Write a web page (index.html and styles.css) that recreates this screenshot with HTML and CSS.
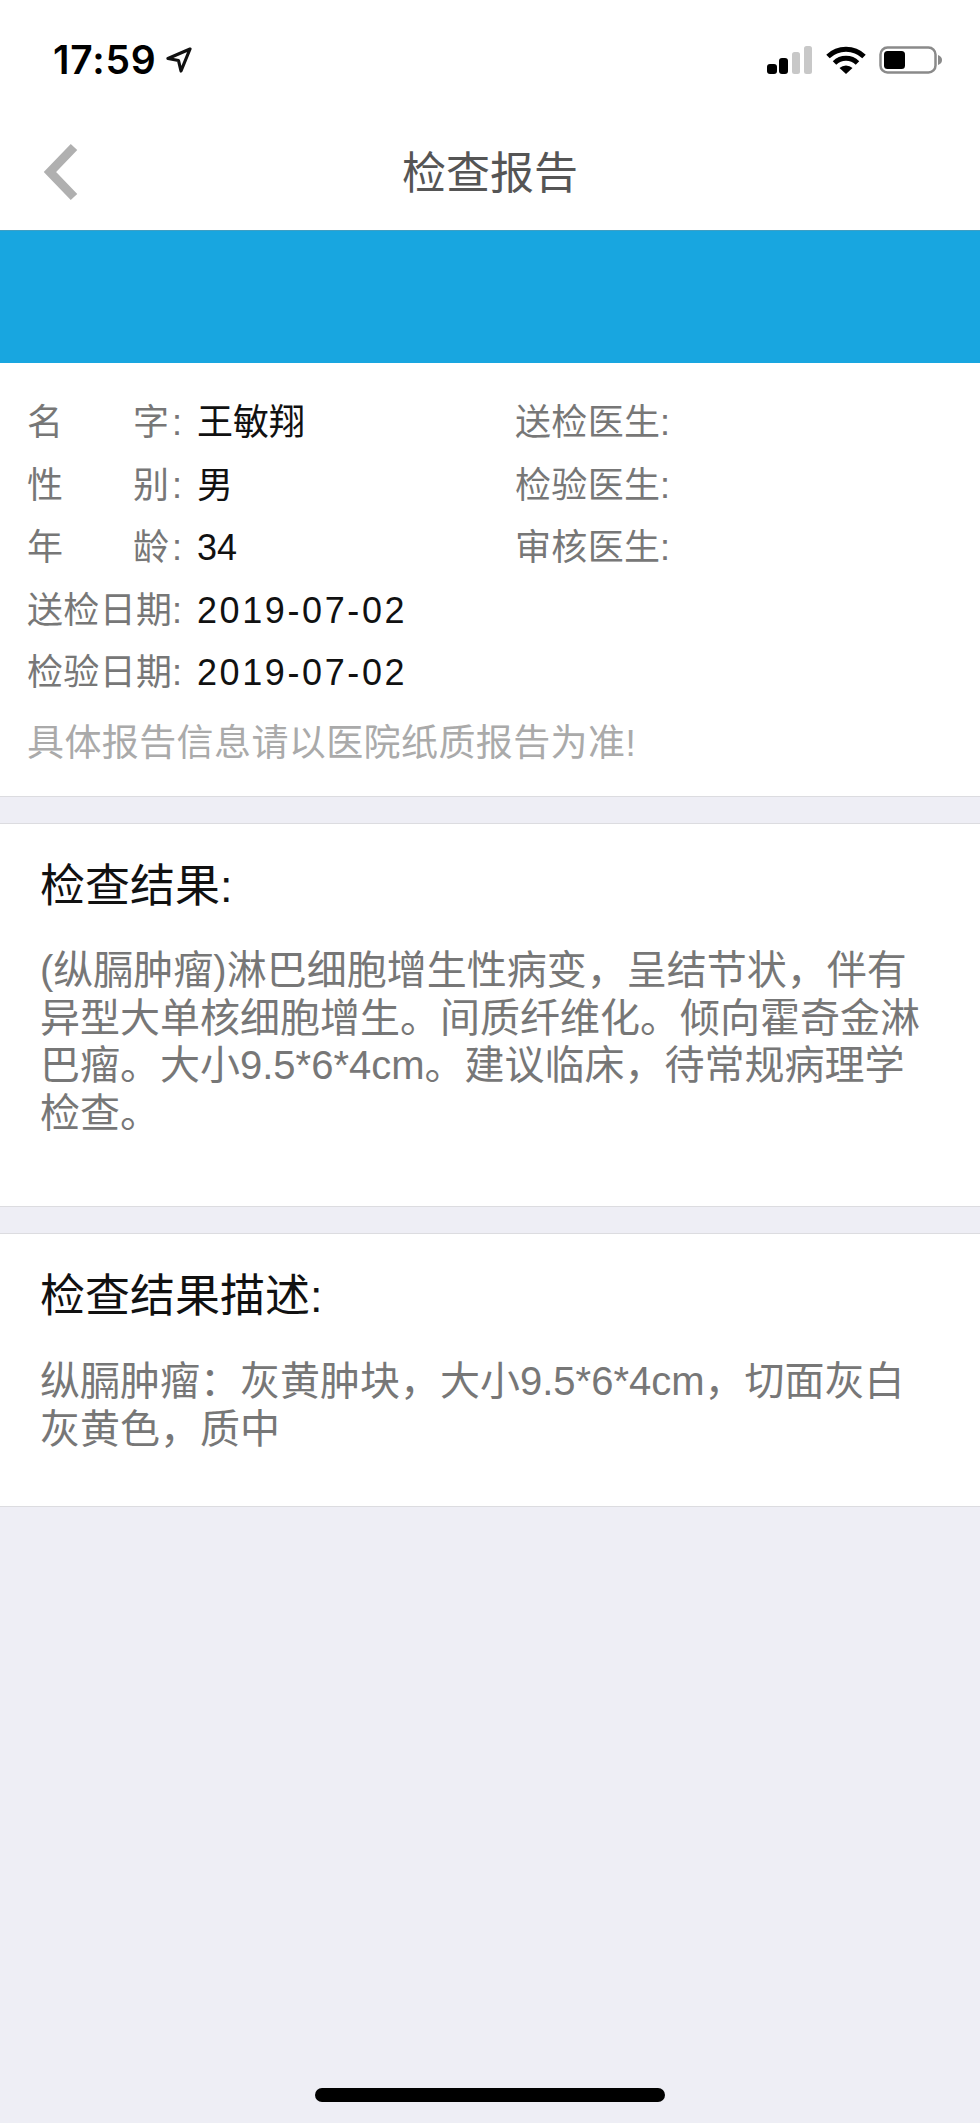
FILE: index.html
```html
<!DOCTYPE html>
<html lang="zh-CN">
<head>
    <meta charset="UTF-8">
    <meta name="viewport" content="width=device-width, initial-scale=1.0">
    <title>检查报告</title>
    <link rel="stylesheet" href="styles.css">
</head>
<body>
    <div class="status-bar">
        <div class="status-left">
            <span class="time">17:59</span>
            <svg class="location" width="26" height="26" viewBox="0 0 26 26">
                <path d="M24 2 L2 11.5 L12.5 13.5 L15 24 Z" fill="none" stroke="#111" stroke-width="3.2" stroke-linejoin="round"/>
            </svg>
        </div>
        <div class="status-right">
            <svg width="46" height="28" viewBox="0 0 46 28">
                <rect x="0" y="18" width="10" height="10" rx="3" fill="#000"/>
                <rect x="12" y="12" width="9" height="16" rx="3" fill="#000"/>
                <rect x="25" y="6" width="8" height="22" rx="2.5" fill="#c8c8c8"/>
                <rect x="37" y="0" width="8" height="28" rx="2.5" fill="#c8c8c8"/>
            </svg>
            <svg width="40" height="28" viewBox="0 0 40 28">
                <path d="M2 10.5 A26 26 0 0 1 38 10.5" fill="none" stroke="#000" stroke-width="5"/>
                <path d="M8.5 17 A16.5 16.5 0 0 1 31.5 17" fill="none" stroke="#000" stroke-width="5"/>
                <path d="M13.5 22 L20 28 L26.5 22 A9.5 9.5 0 0 0 13.5 22 Z" fill="#000"/>
            </svg>
            <svg width="64" height="28" viewBox="0 0 64 28">
                <rect x="1.5" y="1.5" width="55" height="25" rx="7" fill="none" stroke="#8a8a8a" stroke-width="2.5"/>
                <rect x="5" y="5" width="21" height="18" rx="3.5" fill="#000"/>
                <path d="M59 9 C62 10 63 12 63 14 C63 16 62 18 59 19 Z" fill="#8a8a8a"/>
            </svg>
        </div>
    </div>

    <div class="nav-bar">
        <svg class="back" width="36" height="58" viewBox="0 0 36 58">
            <path d="M31 4 L7 29 L31 54" fill="none" stroke="#b0b0b0" stroke-width="9"/>
        </svg>
        <h1>检查报告</h1>
    </div>

    <div class="banner"></div>

    <div class="info">
        <div class="info-row">
            <div class="field">
                <span class="label short">名字</span><span class="colon">:</span>
                <span class="value">王敏翔</span>
            </div>
            <div class="field"><span class="label">送检医生</span><span class="colon">:</span></div>
        </div>
        <div class="info-row">
            <div class="field">
                <span class="label short">性别</span><span class="colon">:</span>
                <span class="value">男</span>
            </div>
            <div class="field"><span class="label">检验医生</span><span class="colon">:</span></div>
        </div>
        <div class="info-row">
            <div class="field">
                <span class="label short">年龄</span><span class="colon">:</span>
                <span class="value">34</span>
            </div>
            <div class="field"><span class="label">审核医生</span><span class="colon">:</span></div>
        </div>
        <div class="info-row">
            <div class="field">
                <span class="label">送检日期</span><span class="colon">:</span>
                <span class="value date">2019-07-02</span>
            </div>
        </div>
        <div class="info-row">
            <div class="field">
                <span class="label">检验日期</span><span class="colon">:</span>
                <span class="value date">2019-07-02</span>
            </div>
        </div>
        <p class="note">具体报告信息请以医院纸质报告为准!</p>
    </div>

    <div class="section result">
        <h2>检查结果:</h2>
        <p>(纵膈肿瘤)淋巴细胞增生性病变，呈结节状，伴有异型大单核细胞增生。间质纤维化。倾向霍奇金淋巴瘤。大小9.5*6*4cm。建议临床，待常规病理学检查。</p>
    </div>

    <div class="section desc">
        <h2>检查结果描述:</h2>
        <p>纵膈肿瘤：灰黄肿块，大小9.5*6*4cm，切面灰白灰黄色，质中</p>
    </div>

    <div class="home-area">
        <div class="home-bar"></div>
    </div>
</body>
</html>
```

FILE: styles.css
```css
* {
    box-sizing: border-box;
}
body {
    font-family: "Liberation Sans", "Noto Sans CJK SC", sans-serif;
    display: flex;
    flex-direction: column;
    height: 100vh;
    margin: 0;
    background: #eeeef5;
}
.status-bar {
    display: flex;
    justify-content: space-between;
    align-items: flex-start;
    height: 110px;
    padding: 46px 37px 0 53px;
    background: white;
}
.status-left {
    display: flex;
    align-items: center;
    gap: 9px;
}
.time {
    font-family: Inter, sans-serif;
    font-size: 39px;
    font-weight: 600;
    line-height: 28px;
    letter-spacing: 0.8px;
    color: #000;
}
.status-right {
    display: flex;
    gap: 13px;
}
.nav-bar {
    display: flex;
    justify-content: center;
    align-items: center;
    position: relative;
    height: 120px;
    background: white;
}
.nav-bar h1 {
    margin: 0;
    font-size: 44px;
    font-weight: 400;
    color: #555;
}
.back {
    position: absolute;
    left: 43px;
    top: 33px;
}
.banner {
    height: 133px;
    background: #18a6e0;
    border-top: 1px solid #3f9fc4;
}
.info {
    height: 434px;
    padding: 35px 27px 0;
    background: white;
    border-bottom: 1px solid #dcdce0;
}
.info-row {
    display: flex;
    height: 62.6px;
    line-height: 50px;
    font-size: 36px;
}
.field {
    display: flex;
    align-items: baseline;
}
.field:first-child {
    width: 488px;
}
.label {
    width: 145px;
    color: #777;
    text-align-last: justify;
}
.short {
    padding-right: 3px;
}
.colon {
    width: 25px;
    color: #777;
}
.value {
    color: #111;
}
.date {
    letter-spacing: 2.6px;
}
.note {
    margin: 9px 0 0;
    font-size: 37px;
    line-height: 48px;
    letter-spacing: 0.4px;
    color: #aaa;
}
.section {
    margin-top: 26px;
    padding: 33px 50px 0 40px;
    background: white;
    border-top: 1px solid #dcdce0;
    border-bottom: 1px solid #dcdce0;
}
.section h2 {
    margin: 0;
    font-size: 45px;
    font-weight: 400;
    line-height: 60px;
    color: #111;
}
.section p {
    margin: 30px 0 0;
    font-size: 40px;
    line-height: 47.6px;
    color: #777;
}
.result {
    height: 384px;
}
.desc {
    height: 274px;
}
.desc p {
    margin-top: 31px;
}
.home-area {
    display: flex;
    justify-content: center;
    margin-top: auto;
    padding-bottom: 21px;
}
.home-bar {
    width: 350px;
    height: 14px;
    border-radius: 7px;
    background: #000;
}
```
